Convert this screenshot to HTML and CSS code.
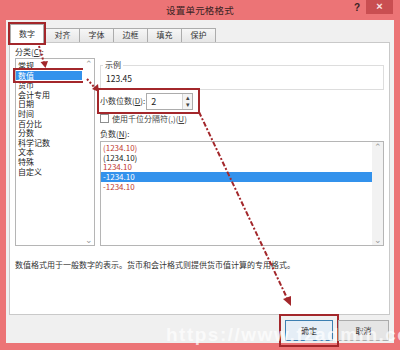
FILE: index.html
```html
<!DOCTYPE html>
<html lang="zh">
<head>
  <meta charset="UTF-8">
  <title>设置单元格格式</title>
  <link rel="stylesheet" href="styles.css">
</head>
<body>
  <div class="window">
    <div class="titlebar">
      <span class="title">设置单元格格式</span>
      <span class="help">?</span>
      <span class="close">×</span>
    </div>

    <div class="client">
      <div class="tabs">
        <div class="tab selected marked">数字</div>
        <div class="tab">对齐</div>
        <div class="tab">字体</div>
        <div class="tab">边框</div>
        <div class="tab">填充</div>
        <div class="tab">保护</div>
      </div>

      <div class="panel">
        <div class="cols">
          <div class="left">
            <div class="label">分类(<u>C</u>):</div>
            <div class="listbox category">
              <ul class="items">
                <li>常规</li>
                <li class="active marked">数值</li>
                <li>货币</li>
                <li>会计专用</li>
                <li>日期</li>
                <li>时间</li>
                <li>百分比</li>
                <li>分数</li>
                <li>科学记数</li>
                <li>文本</li>
                <li>特殊</li>
                <li>自定义</li>
              </ul>
              <div class="scrollbar">
                <span class="arrow">⌃</span>
                <span class="arrow">⌄</span>
              </div>
            </div>
          </div>

          <div class="right">
            <fieldset class="sample">
              <legend>示例</legend>
              <div class="sample-value">123.45</div>
            </fieldset>

            <div class="decimal marked">
              <span class="label">小数位数(<u>D</u>):</span>
              <div class="spin">
                <span class="spin-value">2</span>
                <div class="spin-btns">
                  <span>▴</span>
                  <span>▾</span>
                </div>
              </div>
            </div>

            <div class="check-row">
              <span class="checkbox"></span>
              <span>使用千位分隔符(,)(<u>U</u>)</span>
            </div>

            <div class="label neg-label">负数(<u>N</u>):</div>
            <div class="listbox negative">
              <ul class="items">
                <li class="red">(1234.10)</li>
                <li>(1234.10)</li>
                <li class="red">1234.10</li>
                <li class="active">-1234.10</li>
                <li class="red">-1234.10</li>
              </ul>
              <div class="scrollbar">
                <span class="arrow">⌃</span>
                <span class="arrow">⌄</span>
              </div>
            </div>
          </div>
        </div>

        <p class="desc">数值格式用于一般数字的表示。货币和会计格式则提供货币值计算的专用格式。</p>
      </div>

      <div class="buttons">
        <button class="btn default marked">确定</button>
        <button class="btn">取消</button>
      </div>
    </div>

    <svg class="marks" width="400" height="350" viewBox="0 0 400 350">
      <g stroke="#a3272b" stroke-width="2" fill="none">
        <path d="M39 46 L44 63" stroke-dasharray="2 2"/>
        <path d="M87 79 L95 88" stroke-dasharray="2 2"/>
        <path d="M199 112 L287 298" stroke-dasharray="5 2 2 2"/>
      </g>
      <g fill="#a3272b">
        <path d="M40.5 62 L48 61 L45.5 68 Z"/>
        <path d="M92 89 L98 84 L99 92 Z"/>
        <path d="M283 299 L291 296 L291 306 Z"/>
      </g>
    </svg>

    <div class="watermark">https://www.fzadmin.co</div>
  </div>
</body>
</html>
```

FILE: styles.css
```css
* {
  box-sizing: border-box;
}

body {
  margin: 0;
  font-family: "Noto Sans CJK SC", "Liberation Sans", sans-serif;
  font-size: 8px;
  color: #222;
}

ul {
  list-style: none;
  margin: 0;
  padding: 0;
}

u {
  text-decoration: underline;
}

.window {
  position: relative;
  width: 400px;
  height: 350px;
  background-color: #ec7476;
  padding: 0 6px 7px 6px;
  overflow: hidden;
}

.titlebar {
  display: flex;
  align-items: flex-start;
  height: 20px;
  margin: 0 -6px;
}

.title {
  flex: 1;
  text-align: center;
  padding-left: 48px;
  font-size: 9.5px;
  line-height: 20px;
  color: #3a2324;
  letter-spacing: 0.2px;
}

.help {
  width: 10px;
  margin-right: 4px;
  font-family: "Liberation Sans", sans-serif;
  font-weight: bold;
  font-size: 10px;
  line-height: 16px;
  color: #3a2324;
  text-align: center;
}

.close {
  width: 27px;
  height: 14px;
  margin-right: 7px;
  background-color: #c94e51;
  color: #fbe4e4;
  font-family: "Liberation Sans", sans-serif;
  font-weight: bold;
  font-size: 11px;
  line-height: 13px;
  text-align: center;
}

.client {
  height: 323px;
  background-color: #f0f0f0;
  display: flex;
  flex-direction: column;
}

.tabs {
  display: flex;
  align-items: flex-end;
  height: 22px;
  padding-left: 4px;
}

.tab {
  width: 35px;
  height: 14px;
  margin-left: -1px;
  border: 1px solid #acacac;
  border-bottom: none;
  background: linear-gradient(#f6f6f6, #e6e6e6);
  text-align: center;
  line-height: 12px;
  color: #333;
}

.tab.selected {
  width: 34px;
  height: 19px;
  margin-left: 0;
  margin-right: 2px;
  margin-bottom: -1px;
  background: #fff;
  line-height: 17px;
  position: relative;
  z-index: 1;
}

.marked {
  outline: 2px solid #a3272b;
}

.tab.marked {
  outline-offset: 0;
}

.panel {
  height: 273px;
  margin: 0 4px 0 3px;
  background-color: #fff;
  border: 1px solid #c9c9c9;
  padding: 4px 5px 0 5px;
}

.cols {
  display: flex;
  gap: 5px;
}

.label {
  line-height: 10px;
  color: #333;
  white-space: nowrap;
}

.left {
  width: 80px;
}

.listbox {
  display: flex;
  border: 1px solid #b5b5b5;
  background: #fff;
}

.category {
  margin-top: 1px;
  height: 188px;
}

.listbox .items {
  flex: 1;
}

.category .items {
  padding-top: 2px;
}

.items li {
  line-height: 9.6px;
  height: 9.6px;
  padding-left: 2px;
  white-space: nowrap;
}

.items li.active {
  background-color: #3392ec;
  color: #fff;
}

.category .items li.marked {
  margin-right: 1px;
  outline-offset: 1px;
}

.items li.red {
  color: #c23a30;
}

.scrollbar {
  width: 11px;
  background-color: #f2f2f2;
  display: flex;
  flex-direction: column;
  justify-content: space-between;
  align-items: center;
  color: #9a9a9a;
  font-size: 9px;
  line-height: 9px;
}

.category .scrollbar {
  background-color: #fff;
}

.arrow {
  display: block;
  height: 10px;
}

.right {
  flex: 1;
}

.sample {
  margin: 13px 0 0 0;
  padding: 2px 5px 0 5px;
  border: 1px solid #dddddd;
  height: 30px;
}

.sample legend {
  padding: 0 2px;
  margin-left: -3px;
  line-height: 10px;
  color: #333;
}

.sample-value {
  line-height: 12px;
  font-size: 8.5px;
  color: #222;
}

.decimal {
  display: flex;
  align-items: center;
  gap: 1px;
  width: 99px;
  height: 22px;
  margin-left: -1px;
  padding-left: 1px;
  outline-offset: 0;
}

.spin {
  display: flex;
  width: 47px;
  height: 17px;
  border: 1px solid #acacac;
  background: #fff;
}

.spin-value {
  flex: 1;
  padding-left: 4px;
  line-height: 15px;
  font-size: 9px;
}

.spin-btns {
  width: 10px;
  display: flex;
  flex-direction: column;
  border-left: 1px solid #d4d4d4;
  font-size: 7px;
  line-height: 7.5px;
  text-align: center;
  color: #444;
  background: #f4f4f4;
}

.check-row {
  display: flex;
  align-items: center;
  gap: 3px;
  height: 10px;
  margin-top: 1px;
  color: #444;
  white-space: nowrap;
}

.checkbox {
  width: 9px;
  height: 9px;
  border: 1px solid #8e8f8f;
  background: #fff;
}

.neg-label {
  margin-top: 6px;
}

.negative {
  margin-top: 2px;
  height: 105px;
}

.negative .items {
  padding-top: 1px;
}

.negative .items li {
  height: 9.7px;
  line-height: 9.7px;
}

.desc {
  margin: 14px 0 0 0;
  line-height: 10px;
  color: #333;
  white-space: nowrap;
}

.buttons {
  display: flex;
  justify-content: flex-end;
  gap: 5px;
  padding: 5px 5px 0 0;
}

.btn {
  width: 48px;
  height: 21px;
  border: 1px solid #acacac;
  background: #e5e5e5;
  font-family: "Noto Sans CJK SC", sans-serif;
  font-size: 8px;
  color: #222;
  padding: 0;
}

.btn.default {
  border-color: #3c7fb1;
  background: #e5eef6;
  outline-offset: 4px;
}

.btn:last-child {
  width: 51px;
}

.marks {
  position: absolute;
  left: 0;
  top: 0;
  pointer-events: none;
}

.watermark {
  position: absolute;
  left: 166px;
  top: 324px;
  font-family: "Liberation Sans", sans-serif;
  font-weight: bold;
  font-size: 19px;
  letter-spacing: 1.5px;
  color: rgba(255, 255, 255, 0.7);
  white-space: nowrap;
  pointer-events: none;
}
```
